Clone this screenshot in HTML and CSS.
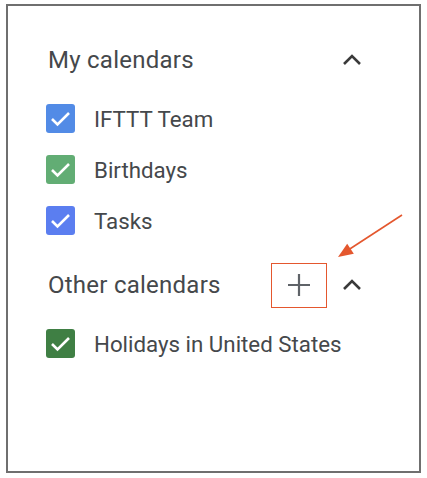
FILE: index.html
```html
<!DOCTYPE html>
<html>
<head>
<meta charset="utf-8">
<link rel="stylesheet" href="styles.css">
</head>
<body>
<div class="frame">
  <div class="section-head first">
    <span class="title">My calendars</span>
    <span class="chev"><svg width="20" height="12" viewBox="0 0 20 12"><path d="M2 10 L10 2 L18 10" fill="none" stroke="#3a3a3a" stroke-width="2.6"/></svg></span>
  </div>
  <div class="item"><span class="cb blue"><svg width="29" height="29" viewBox="0 0 29 29"><path d="M6 15 L11.5 20.5 L23 9" fill="none" stroke="#fff" stroke-width="2.6"/></svg></span><span class="label">IFTTT Team</span></div>
  <div class="item"><span class="cb green"><svg width="29" height="29" viewBox="0 0 29 29"><path d="M6 15 L11.5 20.5 L23 9" fill="none" stroke="#fff" stroke-width="2.6"/></svg></span><span class="label">Birthdays</span></div>
  <div class="item"><span class="cb indigo"><svg width="29" height="29" viewBox="0 0 29 29"><path d="M6 15 L11.5 20.5 L23 9" fill="none" stroke="#fff" stroke-width="2.6"/></svg></span><span class="label">Tasks</span></div>
  <div class="section-head second">
    <span class="title">Other calendars</span>
    <span class="add"><svg width="24" height="24" viewBox="0 0 24 24"><path d="M12 1 V23 M1 12 H23" fill="none" stroke="#5f6368" stroke-width="2.2"/></svg></span>
    <span class="chev"><svg width="20" height="12" viewBox="0 0 20 12"><path d="M2 10 L10 2 L18 10" fill="none" stroke="#3a3a3a" stroke-width="2.6"/></svg></span>
  </div>
  <div class="item holiday"><span class="cb dkgreen"><svg width="29" height="29" viewBox="0 0 29 29"><path d="M6 15 L11.5 20.5 L23 9" fill="none" stroke="#fff" stroke-width="2.6"/></svg></span><span class="label">Holidays in United States</span></div>
  <svg class="arrow" width="427" height="478" viewBox="0 0 427 478"><line x1="402" y1="215" x2="349" y2="249.5" stroke="#e4572e" stroke-width="1.6"/><polygon points="338,257 347.2,243.8 353.8,253.8" fill="#e4572e"/></svg>
</div>
</body>
</html>
```
FILE: styles.css
```css
html, body {
  margin: 0;
  padding: 0;
  background: #fff;
}
body {
  font-family: Roboto, "Liberation Sans", sans-serif;
  color: #45484b;
}
.frame {
  position: relative;
  box-sizing: border-box;
  width: 415px;
  height: 469px;
  margin: 4px 0 0 6px;
  border: 2px solid #6f6f6f;
  padding: 34px 0 0 0;
}
.section-head {
  display: flex;
  align-items: center;
  height: 40px;
  padding-left: 40px;
}
.section-head .title {
  font-size: 24px;
  letter-spacing: 0.25px;
  flex: 1;
}
.chev {
  display: flex;
  width: 20px;
  margin-right: 57px;
}
.section-head.second {
  margin-top: 19px;
}
.add {
  box-sizing: border-box;
  width: 56px;
  height: 45px;
  border: 1.6px solid #e4572e;
  display: flex;
  align-items: center;
  justify-content: center;
  margin-right: 15px;
}
.item {
  display: flex;
  align-items: center;
  height: 51px;
  padding-left: 38px;
}
.section-head.first + .item {
  margin-top: 13px;
}
.item.holiday {
  margin-top: 13px;
}
.cb {
  width: 29px;
  height: 29px;
  border-radius: 3px;
  display: flex;
}
.blue { background: #528be6; }
.green { background: #62ad74; }
.indigo { background: #5b7ef0; }
.dkgreen { background: #3f7f44; }
.label {
  font-size: 22.3px;
  margin-left: 19px;
}
.arrow {
  position: absolute;
  left: -8px;
  top: -6px;
  pointer-events: none;
}
```
